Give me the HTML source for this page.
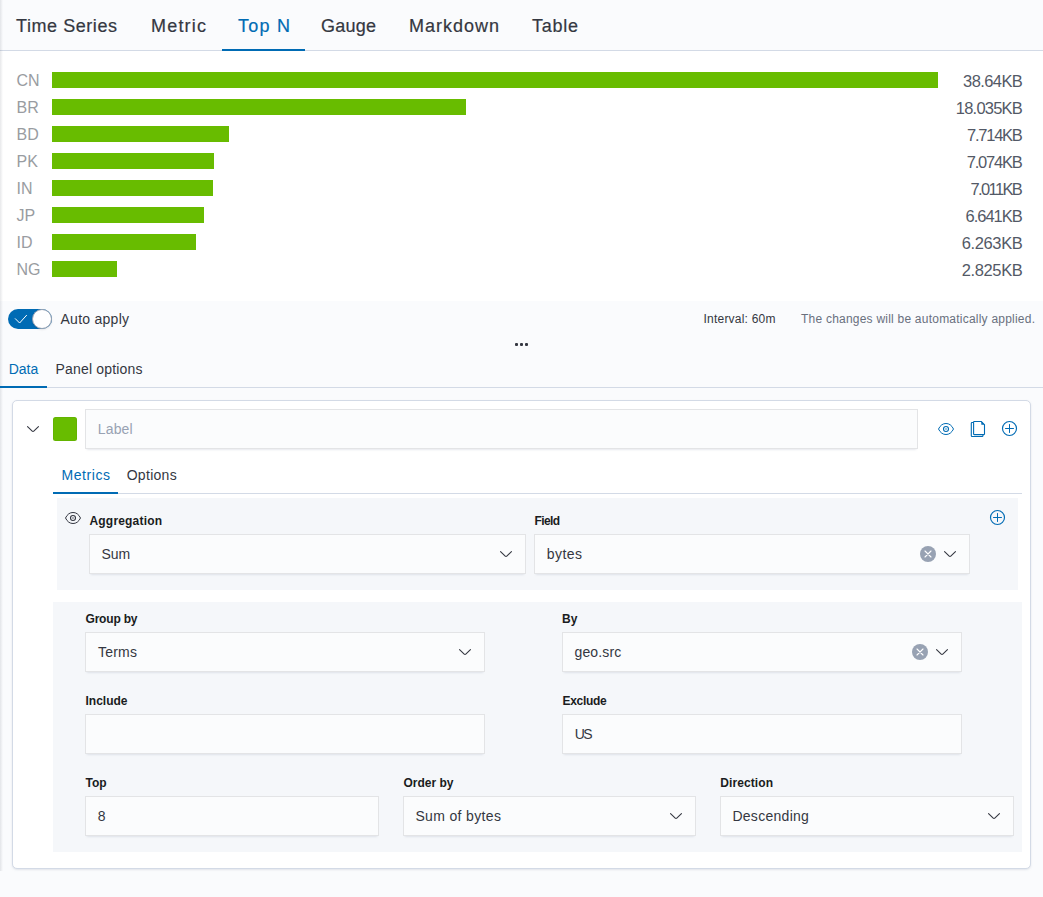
<!DOCTYPE html>
<html><head><meta charset="utf-8"><style>
html,body{margin:0;padding:0;}
body{width:1043px;height:897px;position:relative;overflow:hidden;background:#FAFBFD;font-family:"Liberation Sans",sans-serif;}
.t{position:absolute;line-height:0;white-space:nowrap;}
.st{-webkit-text-stroke:0.2px currentColor;}
.bar{position:absolute;left:52px;height:16px;background:#68BC00;}
.inp{position:absolute;background:#FBFCFD;box-shadow:0 1px 1px -1px rgba(152,162,179,.2),0 3px 2px -2px rgba(152,162,179,.2),inset 0 0 0 1px rgba(16,22,26,.1);}
.ic{position:absolute;}
.abs{position:absolute;}
</style></head><body>
<div class="abs" style="left:0;top:0;width:1043px;height:50px;background:#FAFBFD;border-bottom:1px solid #D3DAE6;"></div>
<div class="abs" style="left:222px;top:49px;width:83px;height:2px;background:#006BB4;"></div>
<div class="abs" style="left:0;top:51px;width:1043px;height:250px;background:#FFFFFF;"></div>
<div class="abs" style="left:0;top:0;width:3px;height:871px;background:linear-gradient(to right,rgba(20,30,50,.10),rgba(20,30,50,.05) 1.5px,rgba(20,30,50,0) 3px);"></div>
<div class="bar" style="top:72px;width:886px"></div>
<div class="bar" style="top:99px;width:414px"></div>
<div class="bar" style="top:126px;width:177px"></div>
<div class="bar" style="top:153px;width:162px"></div>
<div class="bar" style="top:180px;width:161px"></div>
<div class="bar" style="top:207px;width:152px"></div>
<div class="bar" style="top:234px;width:144px"></div>
<div class="bar" style="top:261px;width:65px"></div>
<!-- toggle -->
<div class="abs" style="left:8px;top:309px;width:44px;height:20px;border-radius:10px;background:#006BB4;"></div>
<svg class="ic" style="left:14px;top:313px" width="16" height="12" viewBox="0 0 16 12"><path d="M1 5.4 L5.6 10 L12.8 2" fill="none" stroke="#fff" stroke-width="1"/></svg>
<div class="abs" style="left:32px;top:309px;width:18px;height:18px;border-radius:50%;background:#fff;border:1px solid #98A2B3;box-shadow:0 1px 2px rgba(0,0,0,.1)"></div>
<!-- dots -->
<div class="abs" style="left:515px;top:343px;width:3px;height:3px;background:#343741;border-radius:1px"></div>
<div class="abs" style="left:520px;top:343px;width:3px;height:3px;background:#343741;border-radius:1px"></div>
<div class="abs" style="left:525px;top:343px;width:3px;height:3px;background:#343741;border-radius:1px"></div>
<!-- data tabs -->
<div class="abs" style="left:0;top:387px;width:1043px;height:1px;background:#D3DAE6;"></div>
<div class="abs" style="left:0;top:386px;width:47px;height:2px;background:#006BB4;"></div>
<!-- panel -->
<div class="abs" style="left:12px;top:400px;width:1017px;height:467px;background:#fff;border:1px solid #D3DAE6;border-radius:5px;box-shadow:0 1px 2px rgba(152,162,179,.25)"></div>
<div class="abs" style="left:53px;top:417px;width:24px;height:24px;border-radius:2.5px;background:#68BC00;box-shadow:inset 0 0 0 1px rgba(0,0,0,.04);"></div>
<!-- metrics tabs -->
<div class="abs" style="left:53px;top:493px;width:969px;height:1px;background:#D3DAE6;"></div>
<div class="abs" style="left:53px;top:492px;width:65px;height:2px;background:#006BB4;"></div>
<div class="abs" style="left:57px;top:498px;width:961px;height:92px;background:#F5F7FA;"></div>
<div class="abs" style="left:53px;top:602px;width:969px;height:250px;background:#F5F7FA;"></div>
<div class="inp" style="left:85px;top:409px;width:833px;height:40px"></div>
<div class="inp" style="left:89px;top:534px;width:437px;height:40px"></div>
<div class="inp" style="left:534px;top:534px;width:436px;height:40px"></div>
<div class="inp" style="left:85px;top:632px;width:400px;height:40px"></div>
<div class="inp" style="left:562px;top:632px;width:400px;height:40px"></div>
<div class="inp" style="left:85px;top:714px;width:400px;height:40px"></div>
<div class="inp" style="left:562px;top:714px;width:400px;height:40px"></div>
<div class="inp" style="left:85px;top:796px;width:294px;height:40px"></div>
<div class="inp" style="left:403px;top:796px;width:293px;height:40px"></div>
<div class="inp" style="left:720px;top:796px;width:294px;height:40px"></div>
<svg class="abs" style="left:0;top:0" width="1043" height="897" viewBox="0 0 1043 897"><path transform="translate(25.00 421.00)" d="M13.069 5.157L8.384 9.768a.546.546 0 01-.768 0L2.93 5.158a.552.552 0 00-.771 0 .53.53 0 000 .759l4.684 4.61c.641.631 1.672.63 2.312 0l4.684-4.61a.53.53 0 000-.76.552.552 0 00-.771 0z" fill="#343741"/><path transform="translate(498.00 546.00)" d="M13.069 5.157L8.384 9.768a.546.546 0 01-.768 0L2.93 5.158a.552.552 0 00-.771 0 .53.53 0 000 .759l4.684 4.61c.641.631 1.672.63 2.312 0l4.684-4.61a.53.53 0 000-.76.552.552 0 00-.771 0z" fill="#343741"/><path transform="translate(942.00 546.00)" d="M13.069 5.157L8.384 9.768a.546.546 0 01-.768 0L2.93 5.158a.552.552 0 00-.771 0 .53.53 0 000 .759l4.684 4.61c.641.631 1.672.63 2.312 0l4.684-4.61a.53.53 0 000-.76.552.552 0 00-.771 0z" fill="#343741"/><path transform="translate(457.00 644.00)" d="M13.069 5.157L8.384 9.768a.546.546 0 01-.768 0L2.93 5.158a.552.552 0 00-.771 0 .53.53 0 000 .759l4.684 4.61c.641.631 1.672.63 2.312 0l4.684-4.61a.53.53 0 000-.76.552.552 0 00-.771 0z" fill="#343741"/><path transform="translate(934.00 644.00)" d="M13.069 5.157L8.384 9.768a.546.546 0 01-.768 0L2.93 5.158a.552.552 0 00-.771 0 .53.53 0 000 .759l4.684 4.61c.641.631 1.672.63 2.312 0l4.684-4.61a.53.53 0 000-.76.552.552 0 00-.771 0z" fill="#343741"/><path transform="translate(668.00 808.00)" d="M13.069 5.157L8.384 9.768a.546.546 0 01-.768 0L2.93 5.158a.552.552 0 00-.771 0 .53.53 0 000 .759l4.684 4.61c.641.631 1.672.63 2.312 0l4.684-4.61a.53.53 0 000-.76.552.552 0 00-.771 0z" fill="#343741"/><path transform="translate(986.00 808.00)" d="M13.069 5.157L8.384 9.768a.546.546 0 01-.768 0L2.93 5.158a.552.552 0 00-.771 0 .53.53 0 000 .759l4.684 4.61c.641.631 1.672.63 2.312 0l4.684-4.61a.53.53 0 000-.76.552.552 0 00-.771 0z" fill="#343741"/><circle cx="928" cy="554" r="8" fill="#98A2B3"/><path d="M925 551 l6 6 M931 551 l-6 6" stroke="#fff" stroke-width="1.1" stroke-linecap="round"/><circle cx="920" cy="652" r="8" fill="#98A2B3"/><path d="M917 649 l6 6 M923 649 l-6 6" stroke="#fff" stroke-width="1.1" stroke-linecap="round"/><circle cx="1009.5" cy="428.5" r="7" fill="none" stroke="#006BB4" stroke-width="1.15"/><path d="M1005.5 428.5 H1013.5 M1009.5 424.5 V432.5" stroke="#006BB4" stroke-width="1" stroke-linecap="round"/><circle cx="997.5" cy="517.5" r="7" fill="none" stroke="#006BB4" stroke-width="1.15"/><path d="M993.5 517.5 H1001.5 M997.5 513.5 V521.5" stroke="#006BB4" stroke-width="1" stroke-linecap="round"/><path d="M938.5 429 C940.4 425.2 942.8 423.5 946 423.5 C949.2 423.5 951.6 425.2 953.5 429 C951.6 432.8 949.2 434.5 946 434.5 C942.8 434.5 940.4 432.8 938.5 429 Z" fill="none" stroke="#006BB4" stroke-width="1"/><circle cx="946" cy="429" r="2.5" fill="none" stroke="#006BB4" stroke-width="1.1"/><circle cx="946" cy="429" r="0.9" fill="#006BB4" opacity=".55"/><path d="M65.5 518 C67.4 514.2 69.8 512.5 73 512.5 C76.2 512.5 78.6 514.2 80.5 518 C78.6 521.8 76.2 523.5 73 523.5 C69.8 523.5 67.4 521.8 65.5 518 Z" fill="none" stroke="#343741" stroke-width="1"/><circle cx="73" cy="518" r="2.5" fill="none" stroke="#343741" stroke-width="1.1"/><circle cx="73" cy="518" r="0.9" fill="#343741" opacity=".55"/><path d="M973.5 422.5 H972 Q971.3 422.5 971.3 423.2 V435.8 Q971.3 436.5 972 436.5 H982.2 Q982.9 436.5 982.9 435.8 V435" fill="none" stroke="#006BB4" stroke-width="1.1"/><path d="M974.2 421.5 H981.3 L984.5 424.7 V434 Q984.5 434.6 983.9 434.6 H974.2 Q973.6 434.6 973.6 434 V422.1 Q973.6 421.5 974.2 421.5 Z" fill="none" stroke="#006BB4" stroke-width="1.1"/><path d="M981.3 421.5 V424.7 H984.5 Z" fill="#006BB4"/></svg>
<div class="t st" style="left:16.00px;top:25.76px;font-size:18px;color:#343741;letter-spacing:0.565px;">Time Series</div>
<div class="t st" style="left:151.00px;top:25.76px;font-size:18px;color:#343741;letter-spacing:1.200px;">Metric</div>
<div class="t st" style="left:238.00px;top:25.76px;font-size:18px;color:#006BB4;letter-spacing:1.245px;">Top N</div>
<div class="t st" style="left:321.00px;top:25.76px;font-size:18px;color:#343741;letter-spacing:0.239px;">Gauge</div>
<div class="t st" style="left:409.00px;top:25.76px;font-size:18px;color:#343741;letter-spacing:0.995px;">Markdown</div>
<div class="t st" style="left:532.00px;top:25.76px;font-size:18px;color:#343741;letter-spacing:0.742px;">Table</div>
<div class="t" style="left:16.50px;top:81.46px;font-size:16px;color:#999CA1;">CN</div>
<div class="t" style="left:963.10px;top:81.28px;font-size:16.5px;color:#535966;letter-spacing:-0.600px;">38.64KB</div>
<div class="t" style="left:16.50px;top:108.46px;font-size:16px;color:#999CA1;">BR</div>
<div class="t" style="left:955.80px;top:108.28px;font-size:16.5px;color:#535966;letter-spacing:-0.783px;">18.035KB</div>
<div class="t" style="left:16.50px;top:135.46px;font-size:16px;color:#999CA1;">BD</div>
<div class="t" style="left:967.10px;top:135.28px;font-size:16.5px;color:#535966;letter-spacing:-1.267px;">7.714KB</div>
<div class="t" style="left:16.50px;top:162.46px;font-size:16px;color:#999CA1;">PK</div>
<div class="t" style="left:966.80px;top:162.28px;font-size:16.5px;color:#535966;letter-spacing:-1.217px;">7.074KB</div>
<div class="t" style="left:16.50px;top:189.46px;font-size:16px;color:#999CA1;">IN</div>
<div class="t" style="left:970.60px;top:189.28px;font-size:16.5px;color:#535966;letter-spacing:-1.646px;">7.011KB</div>
<div class="t" style="left:16.50px;top:216.46px;font-size:16px;color:#999CA1;">JP</div>
<div class="t" style="left:965.50px;top:216.28px;font-size:16.5px;color:#535966;letter-spacing:-1.000px;">6.641KB</div>
<div class="t" style="left:16.50px;top:243.46px;font-size:16px;color:#999CA1;">ID</div>
<div class="t" style="left:961.80px;top:243.28px;font-size:16.5px;color:#535966;letter-spacing:-0.384px;">6.263KB</div>
<div class="t" style="left:16.50px;top:270.46px;font-size:16px;color:#999CA1;">NG</div>
<div class="t" style="left:961.80px;top:270.28px;font-size:16.5px;color:#535966;letter-spacing:-0.384px;">2.825KB</div>
<div class="t" style="left:60.50px;top:319.15px;font-size:14px;color:#343741;letter-spacing:0.260px;">Auto apply</div>
<div class="t" style="left:703.50px;top:318.84px;font-size:12px;color:#343741;letter-spacing:0.219px;">Interval: 60m</div>
<div class="t" style="left:801.00px;top:318.84px;font-size:12px;color:#69707D;letter-spacing:0.224px;">The changes will be automatically applied.</div>
<div class="t" style="left:8.70px;top:369.15px;font-size:14px;color:#006BB4;letter-spacing:0.009px;">Data</div>
<div class="t" style="left:55.50px;top:369.15px;font-size:14px;color:#343741;letter-spacing:0.180px;">Panel options</div>
<div class="t" style="left:97.70px;top:429.15px;font-size:14px;color:#98A2B3;letter-spacing:0.187px;">Label</div>
<div class="t" style="left:61.50px;top:475.15px;font-size:14px;color:#006BB4;letter-spacing:0.565px;">Metrics</div>
<div class="t" style="left:126.70px;top:475.15px;font-size:14px;color:#343741;letter-spacing:0.292px;">Options</div>
<div class="t" style="left:89.50px;top:520.84px;font-size:12px;color:#1A1C21;font-weight:700;letter-spacing:0.183px;">Aggregation</div>
<div class="t" style="left:534.40px;top:520.84px;font-size:12px;color:#1A1C21;font-weight:700;letter-spacing:-0.551px;">Field</div>
<div class="t" style="left:101.50px;top:554.15px;font-size:14px;color:#343741;">Sum</div>
<div class="t" style="left:546.70px;top:554.15px;font-size:14px;color:#343741;letter-spacing:0.460px;">bytes</div>
<div class="t" style="left:85.50px;top:618.84px;font-size:12px;color:#1A1C21;font-weight:700;letter-spacing:-0.191px;">Group by</div>
<div class="t" style="left:562.00px;top:618.84px;font-size:12px;color:#1A1C21;font-weight:700;">By</div>
<div class="t" style="left:98.00px;top:652.15px;font-size:14px;color:#343741;letter-spacing:0.222px;">Terms</div>
<div class="t" style="left:574.50px;top:652.15px;font-size:14px;color:#343741;letter-spacing:0.132px;">geo.src</div>
<div class="t" style="left:85.50px;top:700.84px;font-size:12px;color:#1A1C21;font-weight:700;">Include</div>
<div class="t" style="left:562.50px;top:700.84px;font-size:12px;color:#1A1C21;font-weight:700;letter-spacing:-0.287px;">Exclude</div>
<div class="t" style="left:574.80px;top:734.15px;font-size:14px;color:#343741;letter-spacing:-1.648px;">US</div>
<div class="t" style="left:85.50px;top:782.84px;font-size:12px;color:#1A1C21;font-weight:700;">Top</div>
<div class="t" style="left:403.50px;top:782.84px;font-size:12px;color:#1A1C21;font-weight:700;">Order by</div>
<div class="t" style="left:720.30px;top:782.84px;font-size:12px;color:#1A1C21;font-weight:700;letter-spacing:0.086px;">Direction</div>
<div class="t" style="left:97.70px;top:816.15px;font-size:14px;color:#343741;">8</div>
<div class="t" style="left:415.40px;top:816.15px;font-size:14px;color:#343741;letter-spacing:0.354px;">Sum of bytes</div>
<div class="t" style="left:732.40px;top:816.15px;font-size:14px;color:#343741;letter-spacing:0.285px;">Descending</div>
</body></html>
